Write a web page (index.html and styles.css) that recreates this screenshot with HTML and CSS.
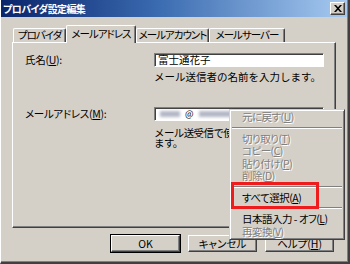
FILE: index.html
```html
<!DOCTYPE html>
<html lang="ja">
<head>
    <meta charset="UTF-8">
    <title>プロバイダ設定編集</title>
    <link rel="stylesheet" href="styles.css">
</head>
<body>
    <div class="window">
        <!-- Title bar -->
        <div class="titlebar">
            <span class="title">プロバイダ設定編集</span>
            <span class="close-btn">
                <svg width="8" height="7" viewBox="0 0 8 7"><path d="M0 0h2l2 2.2 2-2.2h2L5 3.5 8 7H6L4 4.8 2 7H0l3-3.5z" fill="#000"/></svg>
            </span>
        </div>

        <div class="dialog-body">
            <!-- Tabs -->
            <div class="tabs">
                <div class="tab tab-provider">プロバイダ</div>
                <div class="tab tab-address active">メールアドレス</div>
                <div class="tab tab-account">メールアカウント</div>
                <div class="tab tab-server">メールサーバー</div>
            </div>

            <div class="panel">
                <div class="field-row first">
                    <label class="field-label">氏名(<u>U</u>):</label>
                    <div class="textbox">富士通花子</div>
                </div>
                <p class="hint">メール送信者の名前を入力します。</p>

                <div class="field-row second">
                    <label class="field-label">メールアドレス(<u>M</u>):</label>
                    <div class="textbox">
                        <span class="blur short"></span><span class="at">@</span><span class="blur long"></span>
                    </div>
                </div>
                <p class="hint tight">メール送受信で使<br>ます。</p>
            </div>

            <div class="buttons">
                <button class="btn default">OK</button>
                <button class="btn">キャンセル</button>
                <button class="btn">ヘルプ(<u>H</u>)</button>
            </div>
        </div>

        <!-- Context menu over the dialog -->
        <div class="context-menu">
            <div class="menu-item disabled">元に戻す(<u>U</u>)</div>
            <div class="menu-sep"></div>
            <div class="menu-item disabled">切り取り(<u>T</u>)</div>
            <div class="menu-item disabled">コピー(<u>C</u>)</div>
            <div class="menu-item disabled">貼り付け(<u>P</u>)</div>
            <div class="menu-item disabled">削除(<u>D</u>)</div>
            <div class="menu-sep"></div>
            <div class="menu-item">すべて選択(<u>A</u>)</div>
            <div class="menu-sep"></div>
            <div class="menu-item">日本語入力 - オフ(<u>L</u>)</div>
            <div class="menu-item disabled">再変換(<u>V</u>)</div>
        </div>
        <div class="highlight"></div>
    </div>
</body>
</html>
```

FILE: styles.css
```css
/* General */
body {
    margin: 0;
    font-family: "Noto Sans CJK JP", "Noto Sans", sans-serif;
    font-size: 10.5px;
    font-feature-settings: "palt";
    color: #000;
    background: #d4d0c8;
}

u {
    text-decoration: underline;
    text-underline-offset: 1px;
}

.window {
    position: relative;
    box-sizing: border-box;
    width: 350px;
    height: 264px;
    overflow: hidden;
    background: #d4d0c8;
    border-left: 1px solid #ffffff;
    border-right: 2px solid #404040;
    border-bottom: 2px solid #404040;
    box-shadow: inset -1px -1px 0 #808080;
}

/* Title bar */
.titlebar {
    height: 17px;
    display: flex;
    align-items: center;
    justify-content: space-between;
    padding: 0 2px 0 2px;
    margin-right: 1px;
    background: linear-gradient(90deg, #0a246a 0%, #3a6ab0 45%, #a6caf0 100%);
}

.title {
    color: #fff;
    font-weight: bold;
    font-size: 10px;
    letter-spacing: -0.6px;
}

.close-btn {
    box-sizing: border-box;
    width: 15px;
    height: 13px;
    display: flex;
    align-items: center;
    justify-content: center;
    background: #d4d0c8;
    border-top: 1px solid #fff;
    border-left: 1px solid #fff;
    border-right: 1px solid #404040;
    border-bottom: 1px solid #404040;
    box-shadow: inset -1px -1px 0 #808080;
}

/* Dialog */
.dialog-body {
    padding: 8px 0 0 11px;
}

.tabs {
    display: flex;
    height: 17px;
    margin-left: 1px;
    position: relative;
    z-index: 1;
}

.tab {
    box-sizing: border-box;
    height: 14px;
    margin-top: 3px;
    line-height: 12px;
    text-align: center;
    letter-spacing: -1px;
    border-top: 1px solid #fff;
    border-left: 1px solid #fff;
    border-right: 1px solid #404040;
    box-shadow: inset -1px 0 0 #808080;
    border-radius: 2px 2px 0 0;
    white-space: nowrap;
}

.tab-provider { width: 53px; }
.tab-address { width: 70px; }
.tab-account { width: 73px; }
.tab-server { width: 76px; }

.tab.active {
    height: 18px;
    margin-top: 0;
    line-height: 15px;
    background: #d4d0c8;
}

.panel {
    box-sizing: border-box;
    width: 324px;
    height: 186px;
    border-top: 1px solid #fff;
    border-left: 1px solid #fff;
    border-right: 1px solid #404040;
    border-bottom: 1px solid #404040;
    box-shadow: inset -1px -1px 0 #808080;
    padding: 9px 0 0 12px;
}

.field-row {
    display: flex;
    align-items: center;
}

.field-row.second {
    margin-top: 24px;
}

.field-label {
    flex: 0 0 129px;
    letter-spacing: -0.3px;
}

.textbox {
    box-sizing: border-box;
    width: 170px;
    height: 14px;
    display: flex;
    align-items: center;
    padding-left: 3px;
    background: #fff;
    border-top: 1px solid #808080;
    border-left: 1px solid #808080;
    border-right: 1px solid #fff;
    border-bottom: 1px solid #fff;
    box-shadow: inset 1px 1px 0 #404040;
}

.hint {
    margin: 5px 0 0 129px;
    line-height: 10px;
    font-feature-settings: normal;
    white-space: nowrap;
}

.hint.tight {
    margin-top: 7px;
    letter-spacing: -0.6px;
}

.blur {
    display: inline-block;
    height: 6px;
    background: #b4b8c6;
    filter: blur(1.5px);
}

.blur.short { width: 20px; margin: 0 5px 0 2px; }
.blur.long { width: 34px; margin-left: 5px; }

.at {
    font-size: 9px;
}

/* Buttons */
.buttons {
    width: 324px;
    display: flex;
    justify-content: flex-end;
    gap: 8px;
    padding-right: 2px;
    box-sizing: border-box;
    margin-top: 7px;
}

.btn {
    box-sizing: border-box;
    width: 69px;
    height: 17px;
    padding: 0;
    font-family: inherit;
    font-size: 10.5px;
    font-feature-settings: "palt";
    line-height: 13px;
    background: #d4d0c8;
    border-top: 1px solid #fff;
    border-left: 1px solid #fff;
    border-right: 1px solid #404040;
    border-bottom: 1px solid #404040;
    box-shadow: inset -1px -1px 0 #808080;
}

.btn.default {
    outline: 1px solid #000;
}

/* Context menu */
.context-menu {
    position: absolute;
    left: 228px;
    top: 109px;
    width: 114px;
    padding: 1px 0;
    background: #d4d0c8;
    border-top: 1px solid #d4d0c8;
    border-left: 1px solid #d4d0c8;
    border-right: 1px solid #404040;
    border-bottom: 1px solid #404040;
    box-shadow: inset 1px 1px 0 #fff, inset -1px -1px 0 #808080;
    z-index: 5;
}

.menu-item {
    height: 12.5px;
    line-height: 12px;
    padding-left: 12px;
    letter-spacing: -0.5px;
    white-space: nowrap;
}

.menu-item.disabled {
    color: #808080;
    text-shadow: 1px 1px 0 #fff;
}

.menu-sep {
    height: 0;
    margin: 3px 2px 4px 2px;
    border-top: 1px solid #808080;
    border-bottom: 1px solid #fff;
}

.highlight {
    position: absolute;
    left: 230px;
    top: 182px;
    width: 88px;
    height: 27px;
    box-sizing: border-box;
    border: 3px solid #ee1c1c;
    z-index: 6;
}
```
